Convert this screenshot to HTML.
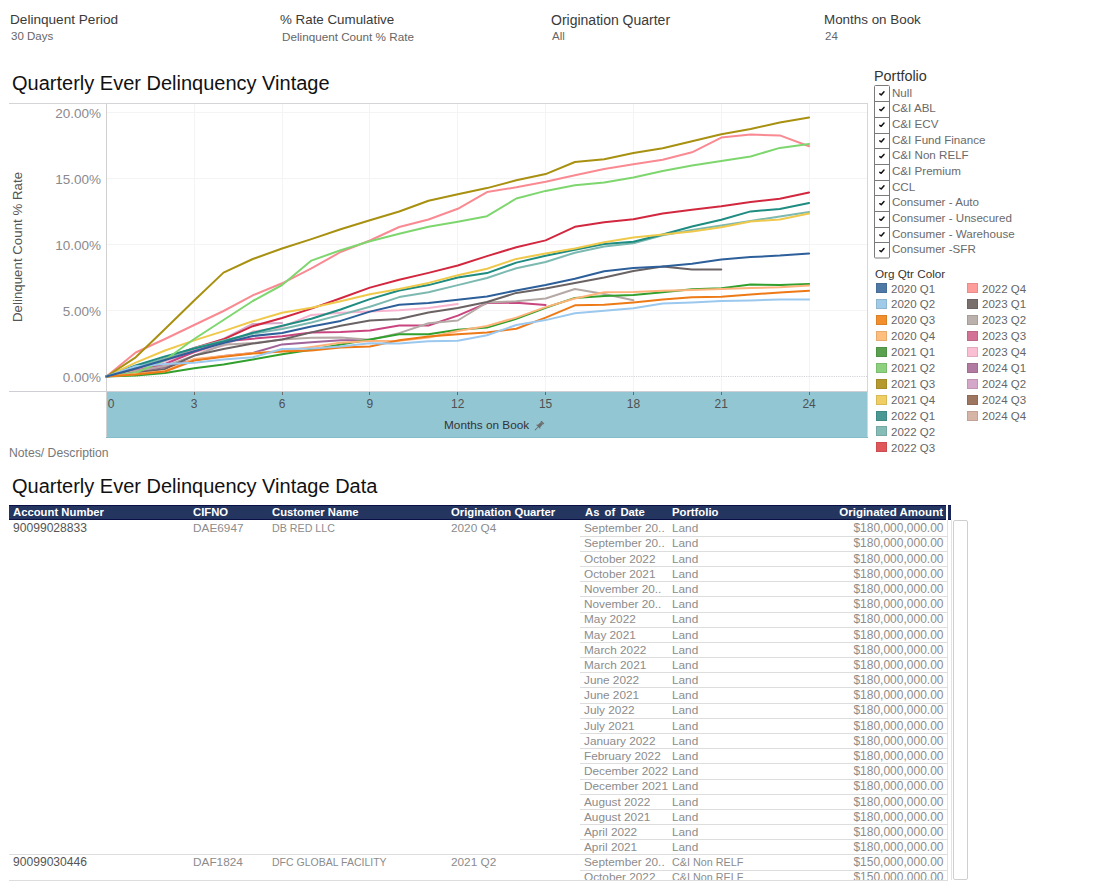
<!DOCTYPE html>
<html><head><meta charset="utf-8">
<style>
*{margin:0;padding:0;box-sizing:border-box}
html,body{width:1100px;height:890px;overflow:hidden;background:#fff;font-family:"Liberation Sans",sans-serif;position:relative}
.a{position:absolute;white-space:nowrap}
.flab{position:absolute;font-size:13.6px;color:#3a3a3a;top:12px;white-space:nowrap}
.fval{position:absolute;font-size:11.5px;color:#666;top:29.5px;white-space:nowrap}
.title{position:absolute;font-size:20px;color:#111;left:12px;white-space:nowrap}
.yl{position:absolute;font-size:13.5px;color:#8a8a8e;left:40px;width:61px;text-align:right;white-space:nowrap}
.xl{position:absolute;font-size:12px;color:#505050;top:397px;width:40px;text-align:center}
.lsq{position:absolute;width:10.5px;height:10px;box-shadow:inset 0 0 0 1px rgba(0,0,0,0.1)}
.ltx{position:absolute;font-size:11.5px;color:#666;white-space:nowrap}
.pft{position:absolute;left:892px;font-size:11.6px;color:#6a6a6a;white-space:nowrap}
.th{position:absolute;top:506px;font-size:11.3px;font-weight:bold;color:#fff;white-space:nowrap}
.td{position:absolute;font-size:11.8px;color:#8c8c8c;white-space:nowrap;line-height:15px}
.amt{left:700px;width:243.5px;text-align:right;font-size:12px}
.rl{position:absolute;height:1px;background:#ddd}
</style></head><body>
<div class="flab" style="left:10px">Delinquent Period</div><div class="fval" style="left:11px">30 Days</div>
<div class="flab" style="left:280px;font-size:13.35px">% Rate Cumulative</div><div class="fval" style="left:282px;font-size:11.7px">Delinquent Count % Rate</div>
<div class="flab" style="left:551px;font-size:14px;top:11.5px">Origination Quarter</div><div class="fval" style="left:552px">All</div>
<div class="flab" style="left:824px;font-size:13.4px">Months on Book</div><div class="fval" style="left:825px">24</div>

<div class="title" style="top:72px">Quarterly Ever Delinquency Vintage</div>

<svg class="a" style="left:0;top:0" width="1100" height="460" viewBox="0 0 1100 460">
<rect x="106" y="392" width="762" height="46" fill="#93C6D3"/>
<g stroke="#F5F3F6" stroke-width="1" fill="none"><line x1="194.5" y1="104" x2="194.5" y2="391" />
<line x1="282.5" y1="104" x2="282.5" y2="391" />
<line x1="369.5" y1="104" x2="369.5" y2="391" />
<line x1="457.5" y1="104" x2="457.5" y2="391" />
<line x1="545.5" y1="104" x2="545.5" y2="391" />
<line x1="633.5" y1="104" x2="633.5" y2="391" />
<line x1="721.5" y1="104" x2="721.5" y2="391" />
<line x1="809.5" y1="104" x2="809.5" y2="391" />
<line x1="107" y1="112.5" x2="867" y2="112.5" />
<line x1="107" y1="178.5" x2="867" y2="178.5" />
<line x1="107" y1="244.5" x2="867" y2="244.5" />
<line x1="107" y1="310.5" x2="867" y2="310.5" /></g>
<line x1="107" y1="376.5" x2="867" y2="376.5" stroke="#CFCFD6" stroke-width="1" stroke-dasharray="1.1,1.2"/>
<line x1="9" y1="103.5" x2="868" y2="103.5" stroke="#D6D4D9" stroke-width="1"/>
<line x1="106.5" y1="103" x2="106.5" y2="438" stroke="#D0D0D0" stroke-width="1"/>
<line x1="867.5" y1="103" x2="867.5" y2="438" stroke="#D6D6D6" stroke-width="1"/>
<line x1="9" y1="391.5" x2="868" y2="391.5" stroke="#D0CDD4" stroke-width="1"/>
<line x1="106" y1="437.5" x2="868" y2="437.5" stroke="#84BCCA" stroke-width="1"/>
<g stroke="#6a6a6a" stroke-width="1"><line x1="194.5" y1="392" x2="194.5" y2="395" />
<line x1="282.5" y1="392" x2="282.5" y2="395" />
<line x1="369.5" y1="392" x2="369.5" y2="395" />
<line x1="457.5" y1="392" x2="457.5" y2="395" />
<line x1="545.5" y1="392" x2="545.5" y2="395" />
<line x1="633.5" y1="392" x2="633.5" y2="395" />
<line x1="721.5" y1="392" x2="721.5" y2="395" />
<line x1="809.5" y1="392" x2="809.5" y2="395" /></g>
<g fill="none" stroke-width="2" stroke-linejoin="round" stroke-linecap="round">
<polyline points="106.4,376.5 135.7,370.0 165.0,361.0 194.2,350.0 223.5,339.0 252.8,324.0 282.1,323.0" stroke="#D4A6C8"/>
<polyline points="106.4,376.5 135.7,372.0 165.0,367.0 194.2,360.0 223.5,356.0 252.8,353.0 282.1,344.4 311.4,342.2 340.6,340.2 369.9,340.0" stroke="#A0639A"/>
<polyline points="106.4,376.5 135.7,368.0 165.0,361.0 194.2,352.0 223.5,345.8 252.8,331.6 282.1,326.9 311.4,314.9 340.6,312.7 369.9,311.6 399.2,310.2 428.5,308.0 457.8,304.0" stroke="#F7B3CF"/>
<polyline points="106.4,376.5 135.7,371.0 165.0,364.0 194.2,352.0 223.5,341.5 252.8,338.7 282.1,336.2 311.4,332.4 340.6,332.1 369.9,330.4 399.2,325.5 428.5,325.5 457.8,315.6 487.0,303.1 516.3,302.8 545.6,305.0" stroke="#C9457F"/>
<polyline points="106.4,376.5 135.7,371.0 165.0,366.0 194.2,355.6 223.5,344.7 252.8,343.1 282.1,339.5 311.4,337.8 340.6,337.6 369.9,339.8 399.2,333.1 428.5,323.3 457.8,320.5 487.0,302.5 516.3,301.3 545.6,298.5 574.9,289.0 604.2,294.1 633.4,300.2" stroke="#B5A9A6"/>
<polyline points="106.4,376.5 135.7,373.0 165.0,369.0 194.2,355.6 223.5,349.1 252.8,343.6 282.1,339.5 311.4,332.4 340.6,325.8 369.9,320.4 399.2,318.9 428.5,312.4 457.8,308.0 487.0,302.0 516.3,292.9 545.6,288.6 574.9,283.0 604.2,277.5 633.4,271.0 662.7,266.6 692.0,269.6 721.3,269.4" stroke="#6B6264"/>
<polyline points="106.4,376.5 135.7,352.5 165.0,339.0 194.2,325.0 223.5,311.0 252.8,295.3 282.1,283.3 311.4,268.4 340.6,252.0 369.9,240.5 399.2,227.0 428.5,219.5 457.8,208.8 487.0,192.1 516.3,187.3 545.6,181.7 574.9,175.2 604.2,169.0 633.4,164.3 662.7,159.8 692.0,152.3 721.3,137.6 750.6,134.6 779.8,135.4 809.1,146.2" stroke="#F98A92"/>
<polyline points="106.4,376.5 135.7,368.5 165.0,358.5 194.2,348.0 223.5,339.3 252.8,326.2 282.1,318.0 311.4,308.6 340.6,298.2 369.9,287.6 399.2,279.8 428.5,272.9 457.8,265.5 487.0,256.1 516.3,247.2 545.6,240.4 574.9,226.8 604.2,222.2 633.4,219.2 662.7,213.4 692.0,209.7 721.3,206.3 750.6,201.9 779.8,198.7 809.1,192.4" stroke="#D2283F"/>
<polyline points="106.4,376.5 135.7,367.0 165.0,358.5 194.2,348.0 223.5,340.4 252.8,333.8 282.1,329.1 311.4,322.5 340.6,314.9 369.9,306.7 399.2,297.1 428.5,292.2 457.8,285.1 487.0,278.0 516.3,268.2 545.6,262.0 574.9,252.7 604.2,246.6 633.4,243.3 662.7,235.3 692.0,230.1 721.3,225.6 750.6,220.9 779.8,216.5 809.1,212.1" stroke="#7CB9B0"/>
<polyline points="106.4,376.5 135.7,365.5 165.0,356.4 194.2,348.5 223.5,341.5 252.8,332.7 282.1,325.8 311.4,318.7 340.6,309.5 369.9,299.1 399.2,290.5 428.5,285.1 457.8,277.5 487.0,273.1 516.3,262.6 545.6,255.8 574.9,249.7 604.2,244.1 633.4,241.8 662.7,234.5 692.0,226.5 721.3,219.8 750.6,211.4 779.8,208.9 809.1,202.9" stroke="#1E8C80"/>
<polyline points="106.4,376.5 135.7,362.6 165.0,350.5 194.2,340.4 223.5,331.1 252.8,321.3 282.1,312.7 311.4,307.8 340.6,301.3 369.9,294.2 399.2,288.9 428.5,282.9 457.8,275.3 487.0,268.7 516.3,258.9 545.6,253.4 574.9,248.4 604.2,242.2 633.4,237.4 662.7,234.5 692.0,231.6 721.3,227.3 750.6,221.6 779.8,219.4 809.1,213.6" stroke="#EFC94C"/>
<polyline points="106.4,376.5 135.7,357.3 165.0,329.0 194.2,300.5 223.5,272.6 252.8,259.0 282.1,248.5 311.4,239.1 340.6,229.3 369.9,220.3 399.2,211.5 428.5,200.8 457.8,194.2 487.0,188.1 516.3,180.3 545.6,174.1 574.9,162.0 604.2,159.2 633.4,152.9 662.7,148.2 692.0,141.2 721.3,134.3 750.6,129.1 779.8,122.5 809.1,117.5" stroke="#A89010"/>
<polyline points="106.4,376.5 135.7,372.8 165.0,360.0 194.2,339.0 223.5,320.0 252.8,301.0 282.1,285.0 311.4,260.6 340.6,250.2 369.9,241.2 399.2,233.8 428.5,226.8 457.8,221.8 487.0,216.2 516.3,198.5 545.6,190.9 574.9,185.3 604.2,182.5 633.4,177.5 662.7,170.9 692.0,165.5 721.3,161.1 750.6,156.5 779.8,147.9 809.1,144.0" stroke="#7ED66E"/>
<polyline points="106.4,376.5 135.7,375.5 165.0,373.0 194.2,368.2 223.5,364.4 252.8,359.5 282.1,354.2 311.4,349.8 340.6,344.4 369.9,339.5 399.2,334.2 428.5,334.2 457.8,329.8 487.0,327.6 516.3,318.9 545.6,307.7 574.9,297.9 604.2,296.0 633.4,295.1 662.7,292.2 692.0,289.3 721.3,288.2 750.6,284.4 779.8,285.1 809.1,283.9" stroke="#32A02D"/>
<polyline points="106.4,376.5 135.7,374.0 165.0,371.0 194.2,358.9 223.5,356.0 252.8,353.0 282.1,350.9 311.4,347.1 340.6,342.7 369.9,341.1 399.2,340.7 428.5,337.5 457.8,330.9 487.0,326.0 516.3,317.6 545.6,307.1 574.9,298.5 604.2,292.3 633.4,291.9 662.7,290.7 692.0,290.0 721.3,289.1 750.6,288.0 779.8,287.3 809.1,285.4" stroke="#FFB37A"/>
<polyline points="106.4,376.5 135.7,374.6 165.0,371.5 194.2,360.5 223.5,356.7 252.8,353.5 282.1,351.5 311.4,350.4 340.6,347.6 369.9,346.5 399.2,340.2 428.5,336.4 457.8,334.2 487.0,332.5 516.3,328.7 545.6,317.6 574.9,305.3 604.2,304.7 633.4,302.4 662.7,299.5 692.0,297.3 721.3,296.7 750.6,294.6 779.8,292.4 809.1,290.7" stroke="#EE7A17"/>
<polyline points="106.4,376.5 135.7,366.3 165.0,364.0 194.2,362.7 223.5,359.5 252.8,357.3 282.1,349.0 311.4,348.5 340.6,346.5 369.9,343.3 399.2,343.5 428.5,341.3 457.8,340.7 487.0,335.3 516.3,325.0 545.6,320.1 574.9,313.3 604.2,310.8 633.4,308.2 662.7,303.6 692.0,302.4 721.3,301.1 750.6,300.4 779.8,299.4 809.1,299.4" stroke="#9BC8EE"/>
<polyline points="106.4,376.5 135.7,368.5 165.0,360.0 194.2,351.3 223.5,343.1 252.8,336.0 282.1,332.9 311.4,326.4 340.6,320.9 369.9,311.6 399.2,304.7 428.5,303.1 457.8,299.8 487.0,296.5 516.3,290.4 545.6,284.9 574.9,278.7 604.2,271.3 633.4,268.1 662.7,266.6 692.0,263.7 721.3,259.5 750.6,257.1 779.8,255.6 809.1,253.4" stroke="#2D5F9A"/>
</g>
</svg>
<div class="yl" style="top:105.5px">20.00%</div>
<div class="yl" style="top:171.5px">15.00%</div>
<div class="yl" style="top:237.5px">10.00%</div>
<div class="yl" style="top:303.5px">5.00%</div>
<div class="yl" style="top:369.5px">0.00%</div>
<div class="a" style="left:10px;top:322px;transform:rotate(-90deg);transform-origin:0 0;font-size:13.3px;color:#555">Delinquent Count % Rate</div>
<div class="xl" style="left:91px;text-align:center">0</div>
<div class="xl" style="left:174.2px">3</div>
<div class="xl" style="left:262.1px">6</div>
<div class="xl" style="left:349.9px">9</div>
<div class="xl" style="left:437.8px">12</div>
<div class="xl" style="left:525.6px">15</div>
<div class="xl" style="left:613.4px">18</div>
<div class="xl" style="left:701.3px">21</div>
<div class="xl" style="left:789.1px">24</div>
<div class="a" style="left:444px;top:418px;font-size:11.8px;color:#333">Months on Book</div><svg class="a" style="left:533px;top:420px" width="12" height="12" viewBox="0 0 12 12"><g transform="rotate(45 6 6)" fill="#6d6d6d"><rect x="4" y="0.5" width="4" height="1.5"/><path d="M4.6,2 L7.4,2 L7.8,6 L9,7.3 L3,7.3 L4.2,6 Z"/><rect x="5.6" y="7.3" width="0.9" height="4.5"/></g></svg>

<div class="a" style="left:874px;top:68px;font-size:14.4px;color:#333">Portfolio</div>
<div class="pft" style="top:85.5px">Null</div>
<div class="pft" style="top:101.2px">C&amp;I ABL</div>
<div class="pft" style="top:116.9px">C&amp;I ECV</div>
<div class="pft" style="top:132.5px">C&amp;I Fund Finance</div>
<div class="pft" style="top:148.2px">C&amp;I Non RELF</div>
<div class="pft" style="top:163.9px">C&amp;I Premium</div>
<div class="pft" style="top:179.6px">CCL</div>
<div class="pft" style="top:195.3px">Consumer - Auto</div>
<div class="pft" style="top:210.9px">Consumer - Unsecured</div>
<div class="pft" style="top:226.6px">Consumer - Warehouse</div>
<div class="pft" style="top:242.3px">Consumer -SFR</div>
<svg class="a" style="left:0;top:0" width="1100" height="270"><g fill="none" stroke="#7a7a7a" stroke-width="1"><rect x="874.5" y="85.5" width="15" height="172.5" rx="1"/><line x1="874.5" y1="101.5" x2="889.5" y2="101.5"/><line x1="874.5" y1="117.5" x2="889.5" y2="117.5"/><line x1="874.5" y1="133.5" x2="889.5" y2="133.5"/><line x1="874.5" y1="148.5" x2="889.5" y2="148.5"/><line x1="874.5" y1="164.5" x2="889.5" y2="164.5"/><line x1="874.5" y1="180.5" x2="889.5" y2="180.5"/><line x1="874.5" y1="195.5" x2="889.5" y2="195.5"/><line x1="874.5" y1="211.5" x2="889.5" y2="211.5"/><line x1="874.5" y1="227.5" x2="889.5" y2="227.5"/><line x1="874.5" y1="242.5" x2="889.5" y2="242.5"/></g><g fill="none" stroke="#111" stroke-width="1.5" stroke-linecap="round" stroke-linejoin="round"><path d="M879.8,93.9 L881.2,94.9 L884.0,91.7"/><path d="M879.8,109.6 L881.2,110.6 L884.0,107.4"/><path d="M879.8,125.3 L881.2,126.3 L884.0,123.1"/><path d="M879.8,140.9 L881.2,141.9 L884.0,138.7"/><path d="M879.8,156.6 L881.2,157.6 L884.0,154.4"/><path d="M879.8,172.3 L881.2,173.3 L884.0,170.1"/><path d="M879.8,188.0 L881.2,189.0 L884.0,185.8"/><path d="M879.8,203.7 L881.2,204.7 L884.0,201.5"/><path d="M879.8,219.3 L881.2,220.3 L884.0,217.1"/><path d="M879.8,235.0 L881.2,236.0 L884.0,232.8"/><path d="M879.8,250.7 L881.2,251.7 L884.0,248.5"/></g></svg>
<div class="a" style="left:875px;top:267px;font-size:11.7px;color:#333">Org Qtr Color</div>
<div class="lsq" style="left:876px;top:283.3px;background:#4E79A7"></div><div class="ltx" style="left:891px;top:282.5px">2020 Q1</div>
<div class="lsq" style="left:876px;top:299.2px;background:#A0CBE8"></div><div class="ltx" style="left:891px;top:298.4px">2020 Q2</div>
<div class="lsq" style="left:876px;top:315.1px;background:#F28E2B"></div><div class="ltx" style="left:891px;top:314.3px">2020 Q3</div>
<div class="lsq" style="left:876px;top:331.0px;background:#FFBE7D"></div><div class="ltx" style="left:891px;top:330.2px">2020 Q4</div>
<div class="lsq" style="left:876px;top:346.9px;background:#59A14F"></div><div class="ltx" style="left:891px;top:346.1px">2021 Q1</div>
<div class="lsq" style="left:876px;top:362.8px;background:#8CD17D"></div><div class="ltx" style="left:891px;top:362.0px">2021 Q2</div>
<div class="lsq" style="left:876px;top:378.7px;background:#B6992D"></div><div class="ltx" style="left:891px;top:377.9px">2021 Q3</div>
<div class="lsq" style="left:876px;top:394.6px;background:#F1CE63"></div><div class="ltx" style="left:891px;top:393.8px">2021 Q4</div>
<div class="lsq" style="left:876px;top:410.5px;background:#499894"></div><div class="ltx" style="left:891px;top:409.7px">2022 Q1</div>
<div class="lsq" style="left:876px;top:426.4px;background:#86BCB6"></div><div class="ltx" style="left:891px;top:425.6px">2022 Q2</div>
<div class="lsq" style="left:876px;top:442.3px;background:#E15759"></div><div class="ltx" style="left:891px;top:441.5px">2022 Q3</div>
<div class="lsq" style="left:967px;top:283.3px;background:#FF9D9A"></div><div class="ltx" style="left:982px;top:282.5px">2022 Q4</div>
<div class="lsq" style="left:967px;top:299.2px;background:#79706E"></div><div class="ltx" style="left:982px;top:298.4px">2023 Q1</div>
<div class="lsq" style="left:967px;top:315.1px;background:#BAB0AC"></div><div class="ltx" style="left:982px;top:314.3px">2023 Q2</div>
<div class="lsq" style="left:967px;top:331.0px;background:#D37295"></div><div class="ltx" style="left:982px;top:330.2px">2023 Q3</div>
<div class="lsq" style="left:967px;top:346.9px;background:#FABFD2"></div><div class="ltx" style="left:982px;top:346.1px">2023 Q4</div>
<div class="lsq" style="left:967px;top:362.8px;background:#B07AA1"></div><div class="ltx" style="left:982px;top:362.0px">2024 Q1</div>
<div class="lsq" style="left:967px;top:378.7px;background:#D4A6C8"></div><div class="ltx" style="left:982px;top:377.9px">2024 Q2</div>
<div class="lsq" style="left:967px;top:394.6px;background:#9D7660"></div><div class="ltx" style="left:982px;top:393.8px">2024 Q3</div>
<div class="lsq" style="left:967px;top:410.5px;background:#D7B5A6"></div><div class="ltx" style="left:982px;top:409.7px">2024 Q4</div>

<div class="a" style="left:9px;top:446px;font-size:12.2px;color:#777">Notes/ Description</div>
<div class="title" style="top:475px">Quarterly Ever Delinquency Vintage Data</div>

<div class="a" style="left:9px;top:505px;width:937px;height:15px;background:#243660;border-top:1px solid #0A0F45;border-bottom:1px solid #0A0F45"></div>
<div class="a" style="left:948px;top:505px;width:3px;height:15px;background:#1A2658;border-top:1px solid #0E1450;border-bottom:1px solid #0E1450"></div>
<div class="th" style="left:13px">Account Number</div>
<div class="th" style="left:193px">CIFNO</div>
<div class="th" style="left:272px">Customer Name</div>
<div class="th" style="left:451px">Origination Quarter</div>
<div class="th" style="left:585px;word-spacing:2px">As of Date</div>
<div class="th" style="left:672px">Portfolio</div>
<div class="th" style="left:700px;width:243px;text-align:right;font-size:11.5px">Originated Amount</div>

<div class="td" style="left:13px;top:521px;color:#555;font-size:12.1px">90099028833</div>
<div class="td" style="left:193px;top:521px">DAE6947</div>
<div class="td" style="left:272px;top:521px;font-size:10.7px">DB RED LLC</div>
<div class="td" style="left:451px;top:521px">2020 Q4</div>
<div class="td" style="left:13px;top:855px;color:#555;font-size:12.1px">90099030446</div>
<div class="td" style="left:193px;top:855px">DAF1824</div>
<div class="td" style="left:272px;top:855px;font-size:10.5px">DFC GLOBAL FACILITY</div>
<div class="td" style="left:451px;top:855px">2021 Q2</div>
<div class="a" style="left:0;top:520px;width:1100px;height:360px;overflow:hidden">
<div style="position:absolute;left:0;top:-520px;width:1100px;height:890px">
<div class="td" style="top:521.30px;left:584px">September 20..</div><div class="td" style="top:521.30px;left:672px">Land</div><div class="td amt" style="top:521.30px">$180,000,000.00</div>
<div class="rl" style="top:536px;left:580px;width:367px"></div>
<div class="td" style="top:536.48px;left:584px">September 20..</div><div class="td" style="top:536.48px;left:672px">Land</div><div class="td amt" style="top:536.48px">$180,000,000.00</div>
<div class="rl" style="top:551px;left:580px;width:367px"></div>
<div class="td" style="top:551.66px;left:584px">October 2022</div><div class="td" style="top:551.66px;left:672px">Land</div><div class="td amt" style="top:551.66px">$180,000,000.00</div>
<div class="rl" style="top:566px;left:580px;width:367px"></div>
<div class="td" style="top:566.84px;left:584px">October 2021</div><div class="td" style="top:566.84px;left:672px">Land</div><div class="td amt" style="top:566.84px">$180,000,000.00</div>
<div class="rl" style="top:581px;left:580px;width:367px"></div>
<div class="td" style="top:582.02px;left:584px">November 20..</div><div class="td" style="top:582.02px;left:672px">Land</div><div class="td amt" style="top:582.02px">$180,000,000.00</div>
<div class="rl" style="top:596px;left:580px;width:367px"></div>
<div class="td" style="top:597.20px;left:584px">November 20..</div><div class="td" style="top:597.20px;left:672px">Land</div><div class="td amt" style="top:597.20px">$180,000,000.00</div>
<div class="rl" style="top:612px;left:580px;width:367px"></div>
<div class="td" style="top:612.38px;left:584px">May 2022</div><div class="td" style="top:612.38px;left:672px">Land</div><div class="td amt" style="top:612.38px">$180,000,000.00</div>
<div class="rl" style="top:627px;left:580px;width:367px"></div>
<div class="td" style="top:627.56px;left:584px">May 2021</div><div class="td" style="top:627.56px;left:672px">Land</div><div class="td amt" style="top:627.56px">$180,000,000.00</div>
<div class="rl" style="top:642px;left:580px;width:367px"></div>
<div class="td" style="top:642.74px;left:584px">March 2022</div><div class="td" style="top:642.74px;left:672px">Land</div><div class="td amt" style="top:642.74px">$180,000,000.00</div>
<div class="rl" style="top:657px;left:580px;width:367px"></div>
<div class="td" style="top:657.92px;left:584px">March 2021</div><div class="td" style="top:657.92px;left:672px">Land</div><div class="td amt" style="top:657.92px">$180,000,000.00</div>
<div class="rl" style="top:672px;left:580px;width:367px"></div>
<div class="td" style="top:673.10px;left:584px">June 2022</div><div class="td" style="top:673.10px;left:672px">Land</div><div class="td amt" style="top:673.10px">$180,000,000.00</div>
<div class="rl" style="top:687px;left:580px;width:367px"></div>
<div class="td" style="top:688.28px;left:584px">June 2021</div><div class="td" style="top:688.28px;left:672px">Land</div><div class="td amt" style="top:688.28px">$180,000,000.00</div>
<div class="rl" style="top:703px;left:580px;width:367px"></div>
<div class="td" style="top:703.46px;left:584px">July 2022</div><div class="td" style="top:703.46px;left:672px">Land</div><div class="td amt" style="top:703.46px">$180,000,000.00</div>
<div class="rl" style="top:718px;left:580px;width:367px"></div>
<div class="td" style="top:718.64px;left:584px">July 2021</div><div class="td" style="top:718.64px;left:672px">Land</div><div class="td amt" style="top:718.64px">$180,000,000.00</div>
<div class="rl" style="top:733px;left:580px;width:367px"></div>
<div class="td" style="top:733.82px;left:584px">January 2022</div><div class="td" style="top:733.82px;left:672px">Land</div><div class="td amt" style="top:733.82px">$180,000,000.00</div>
<div class="rl" style="top:748px;left:580px;width:367px"></div>
<div class="td" style="top:749.00px;left:584px">February 2022</div><div class="td" style="top:749.00px;left:672px">Land</div><div class="td amt" style="top:749.00px">$180,000,000.00</div>
<div class="rl" style="top:763px;left:580px;width:367px"></div>
<div class="td" style="top:764.18px;left:584px">December 2022</div><div class="td" style="top:764.18px;left:672px">Land</div><div class="td amt" style="top:764.18px">$180,000,000.00</div>
<div class="rl" style="top:779px;left:580px;width:367px"></div>
<div class="td" style="top:779.36px;left:584px">December 2021</div><div class="td" style="top:779.36px;left:672px">Land</div><div class="td amt" style="top:779.36px">$180,000,000.00</div>
<div class="rl" style="top:794px;left:580px;width:367px"></div>
<div class="td" style="top:794.54px;left:584px">August 2022</div><div class="td" style="top:794.54px;left:672px">Land</div><div class="td amt" style="top:794.54px">$180,000,000.00</div>
<div class="rl" style="top:809px;left:580px;width:367px"></div>
<div class="td" style="top:809.72px;left:584px">August 2021</div><div class="td" style="top:809.72px;left:672px">Land</div><div class="td amt" style="top:809.72px">$180,000,000.00</div>
<div class="rl" style="top:824px;left:580px;width:367px"></div>
<div class="td" style="top:824.90px;left:584px">April 2022</div><div class="td" style="top:824.90px;left:672px">Land</div><div class="td amt" style="top:824.90px">$180,000,000.00</div>
<div class="rl" style="top:839px;left:580px;width:367px"></div>
<div class="td" style="top:840.08px;left:584px">April 2021</div><div class="td" style="top:840.08px;left:672px">Land</div><div class="td amt" style="top:840.08px">$180,000,000.00</div>
<div class="rl" style="top:854px;left:9px;width:938px"></div>
<div class="td" style="top:855.26px;left:584px">September 20..</div><div class="td" style="top:855.26px;left:672px"><span style="font-size:10.8px">C&amp;I Non RELF</span></div><div class="td amt" style="top:855.26px">$150,000,000.00</div>
<div class="rl" style="top:870px;left:580px;width:367px"></div>
<div class="td" style="top:870.44px;left:584px">October 2022</div><div class="td" style="top:870.44px;left:672px"><span style="font-size:10.8px">C&amp;I Non RELF</span></div><div class="td amt" style="top:870.44px">$150,000,000.00</div>
</div></div>
<div class="a" style="left:947px;top:520px;width:1px;height:360px;background:#e3e3e3"></div>
<div class="a" style="left:951px;top:520px;width:1px;height:360px;background:#e3e3e3"></div>
<div class="a" style="left:953px;top:520px;width:15px;height:360px;border:1px solid #cfcfcf;border-radius:2px"></div>
<div class="a" style="left:9px;top:880px;width:939px;height:1px;background:#ddd"></div>
</body></html>
